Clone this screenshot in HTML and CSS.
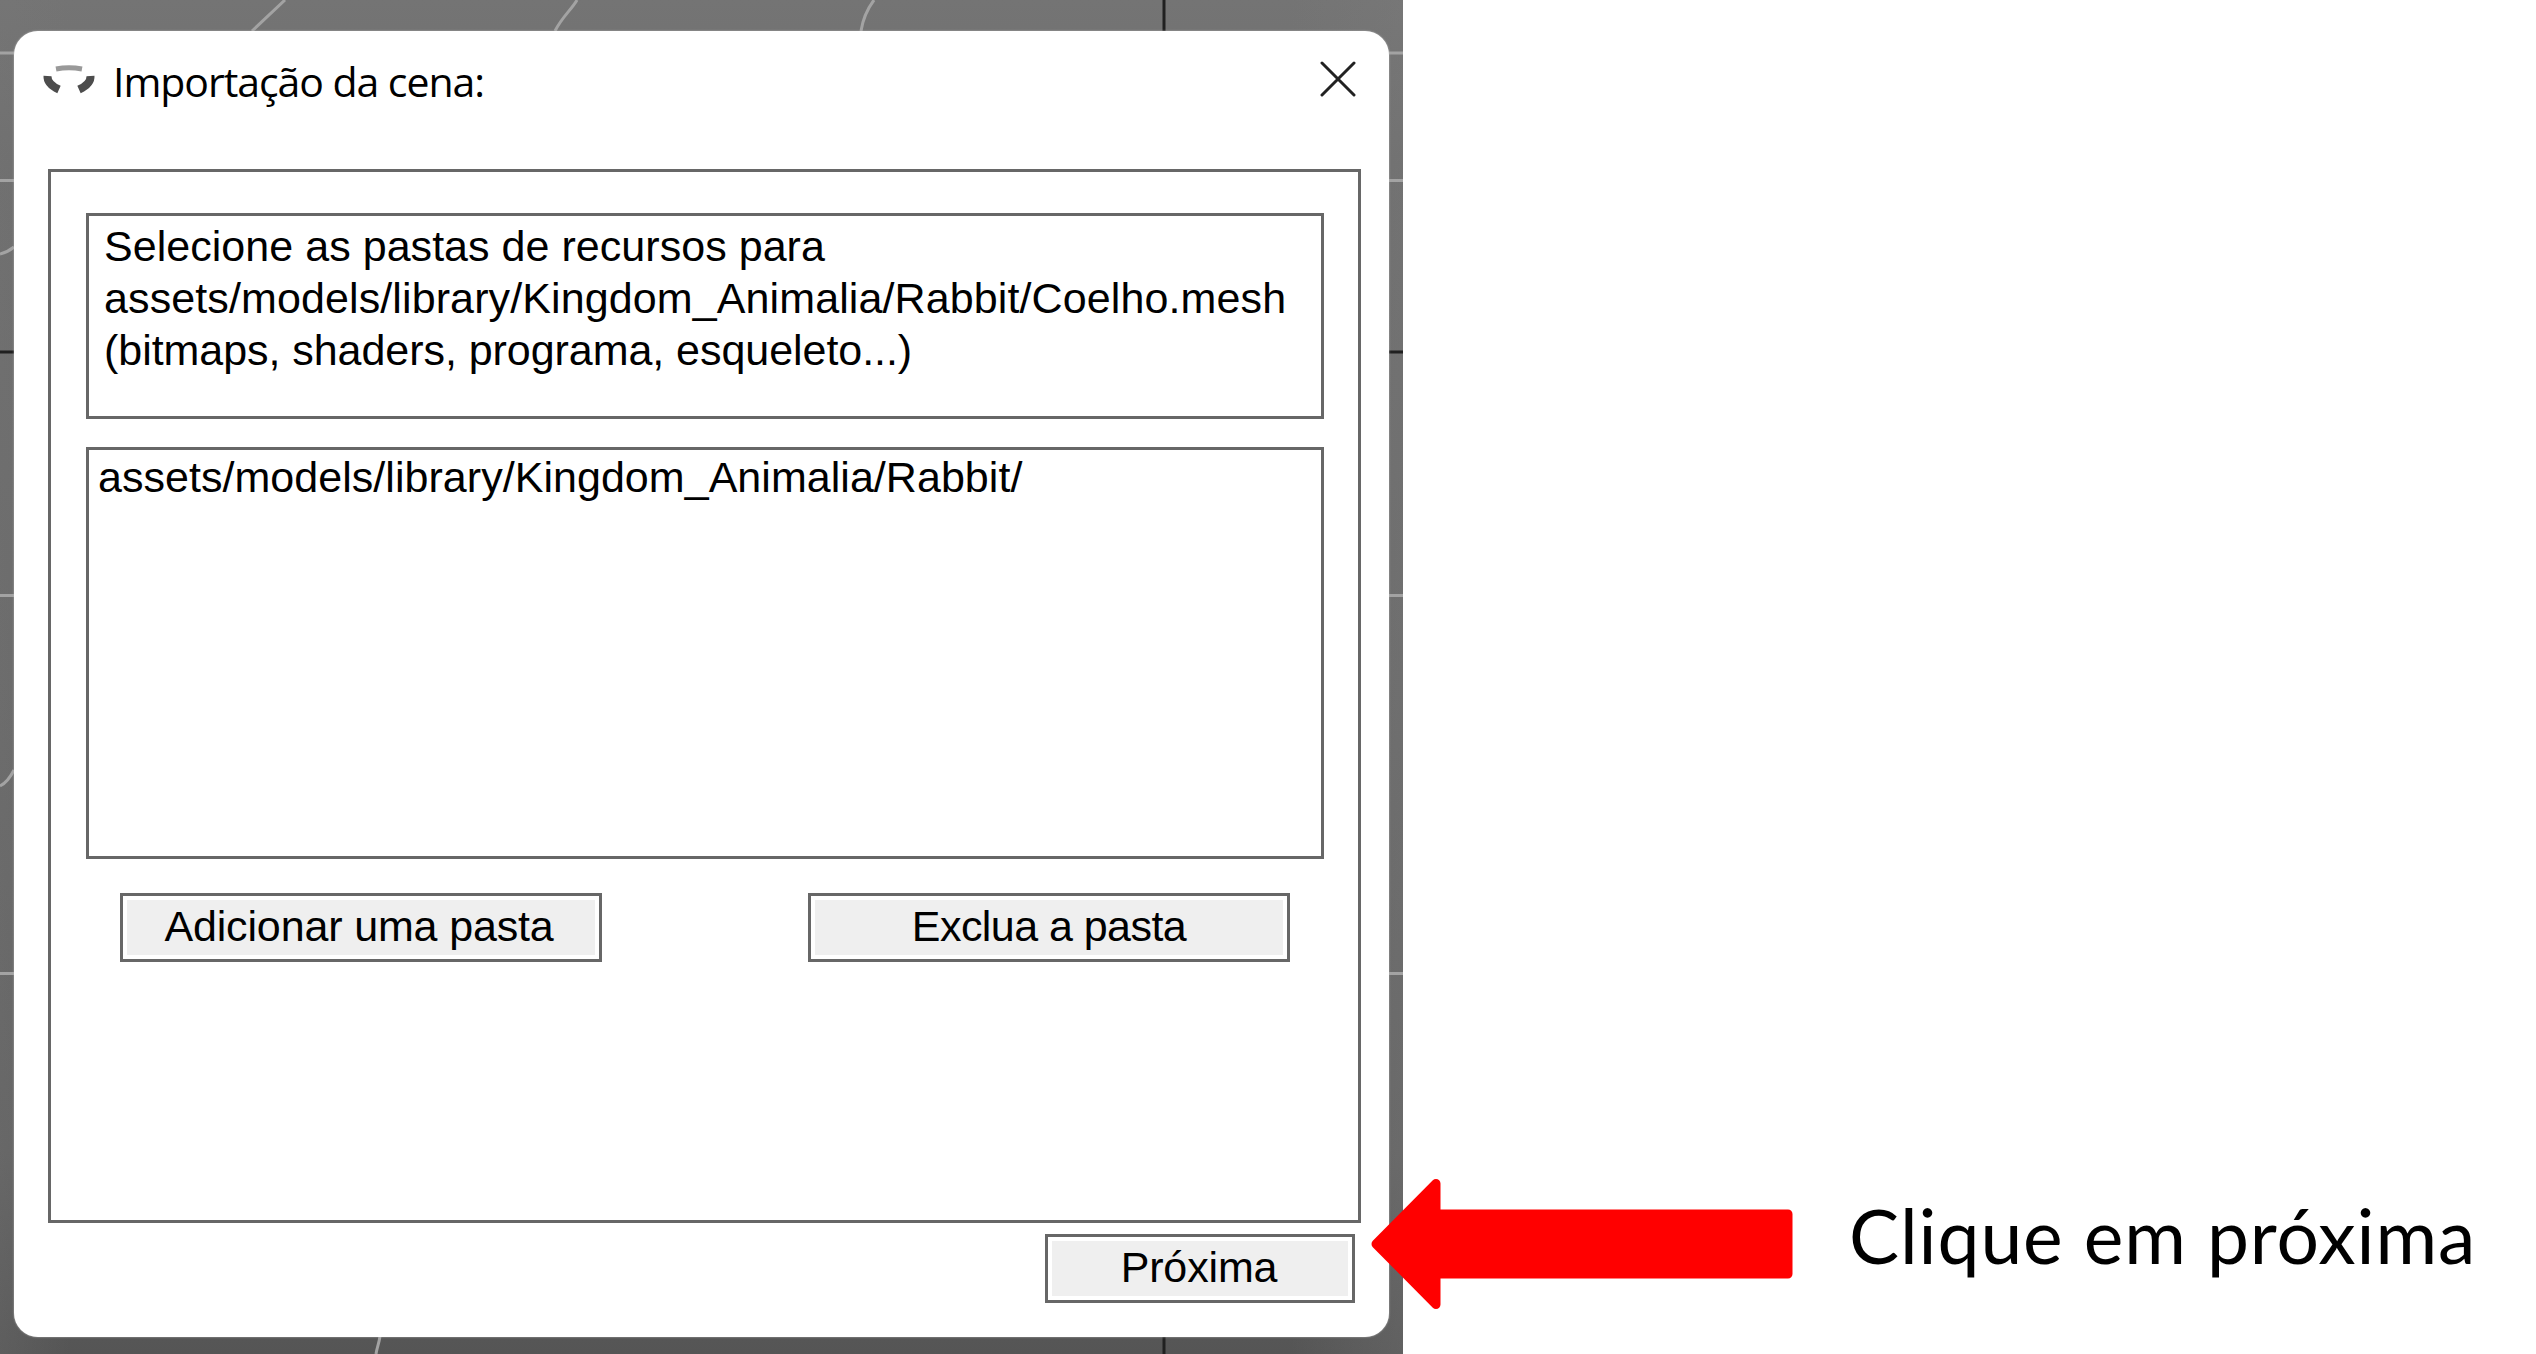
FILE: index.html
```html
<!DOCTYPE html>
<html lang="pt-BR">
<head>
<meta charset="utf-8">
<title>Importação da cena</title>
<link rel="stylesheet" href="styles.css">
</head>
<body>
<main class="slide">
  <section class="viewport">
    <svg class="grid" viewBox="0 0 1403 1354" aria-hidden="true">
      <g class="grid-light">
        <path d="M0 53H1403M0 180.500H1403M0 595.500H1403M0 973.500H1403"/>
        <path d="M285 0L252 31M577 0C572 9 562 17 555 31M874 0C868 8 863 18 861 31M0 254Q8 252 14 247M0 786Q8 782 14 770M380 1336C379 1344 377 1347 376 1354"/>
      </g>
      <path class="grid-axis" d="M1164 0V1354M0 352H1403"/>
    </svg>
    <div class="dialog">
      <header class="titlebar">
        <svg class="app-icon" viewBox="0 0 56 34" aria-hidden="true">
          <path class="icon-top" d="M15 6Q28 3.500 41 6"/>
          <path class="icon-arc" d="M6.500 13Q6 21 18 26.500M49.500 13Q50 21 38 26.500"/>
        </svg>
        <h1 class="title">Importação da cena:</h1>
        <svg class="close" viewBox="0 0 36 36" aria-hidden="true"><path d="M2 2L34 34M34 2L2 34"/></svg>
      </header>
      <div class="panel">
        <div class="box info">
          <p>Selecione as pastas de recursos para</p>
          <p class="path">assets/models/library/Kingdom_Animalia/Rabbit/Coelho.mesh</p>
          <p class="hint">(bitmaps, shaders, programa, esqueleto...)</p>
        </div>
        <div class="box list"><p>assets/models/library/Kingdom_Animalia/Rabbit/</p></div>
        <div class="actions">
          <button class="btn add">Adicionar uma pasta</button>
          <button class="btn remove">Exclua a pasta</button>
        </div>
      </div>
      <footer class="footer"><button class="btn next">Próxima</button></footer>
    </div>
  </section>
  <aside class="note"><p class="caption">Clique em próxima</p></aside>
  <svg class="arrow" viewBox="0 0 424 134" aria-hidden="true">
    <path d="M5 67L65 6.500V37H417V97H65V127.500Z"/>
  </svg>
</main>
</body>
</html>
```
FILE: styles.css
```css
* { box-sizing: border-box; }
body { margin: 0; background: #fff; color: #000; }
h1, p { margin: 0; font-weight: 400; white-space: nowrap; }
.slide { position: relative; display: flex; width: 2536px; height: 1354px; overflow: hidden; }
.viewport {
  position: relative; width: 1403px; height: 1354px; padding: 31px 14px 17px; flex: none;
  background: linear-gradient(90deg, rgba(120,120,120,.25), transparent 5%, transparent 92%, rgba(125,125,125,.3)), linear-gradient(#747474, #6e6e6e 12%, #696969 50%, #626262 85%, #555);
}
.grid { position: absolute; inset: 0; width: 1403px; height: 1354px; }
.grid path { fill: none; stroke-width: 3; }
.grid-light { stroke: #a3a3a3; }
.grid .grid-axis { stroke: #202020; }
.dialog {
  position: relative; display: flex; flex-direction: column; height: 1306px;
  padding: 0 28px 0 34px; background: #fff; border-radius: 24px; box-shadow: 0 0 2px #bbb;
}
.titlebar { display: flex; height: 138px; flex: none; align-items: flex-start; }
.app-icon { width: 56px; height: 34px; margin: 32px 0 0 -7px; fill: none; }
.icon-top { stroke: #999; stroke-width: 5; }
.icon-arc { stroke: #4d4d4d; stroke-width: 8; }
.title { flex: 1; margin: 20px 0 0 16px; font: 400 41px/60px "Open Sans", sans-serif; letter-spacing: -1.05px; }
.close { width: 36px; height: 36px; margin: 30px 5px 0 0; stroke: #222; stroke-width: 3; fill: none; stroke-linecap: round; }
.panel { width: 1313px; height: 1054px; padding: 41px 35px 0; border: 3px solid #676767; flex: none; }
.box { width: 1238px; border: 3px solid #676767; font: 400 43px/52px "Liberation Sans", sans-serif; }
.info { height: 206px; padding: 4px 15px; letter-spacing: .04px; }
.path { letter-spacing: .11px; }
.hint { letter-spacing: -.05px; }
.list { height: 412px; margin-top: 28px; padding: 1px 9px; letter-spacing: .04px; }
.actions { display: flex; justify-content: space-between; padding: 34px 33px 0 34px; }
.btn {
  width: 482px; height: 69px; padding: 0 0 3px; border: 3px solid #676767; background: #efefef;
  box-shadow: inset 0 0 0 4px #fff; color: #000; font: 400 43px/60px "Liberation Sans", sans-serif; white-space: nowrap;
}
.add { padding-right: 4px; letter-spacing: -.15px; }
.remove { letter-spacing: -.55px; }
.footer { display: flex; justify-content: flex-end; padding: 11px 6px 0 0; }
.next { width: 310px; padding-right: 2px; letter-spacing: -.15px; }
.note { flex: 1; padding: 1190px 0 0 446px; }
.caption { font: 400 75px/90px Lato, sans-serif; letter-spacing: .9px; }
.arrow { position: absolute; left: 1371px; top: 1177px; width: 424px; height: 134px; }
.arrow path { fill: #f00; stroke: #f00; stroke-width: 9; stroke-linejoin: round; }
```
